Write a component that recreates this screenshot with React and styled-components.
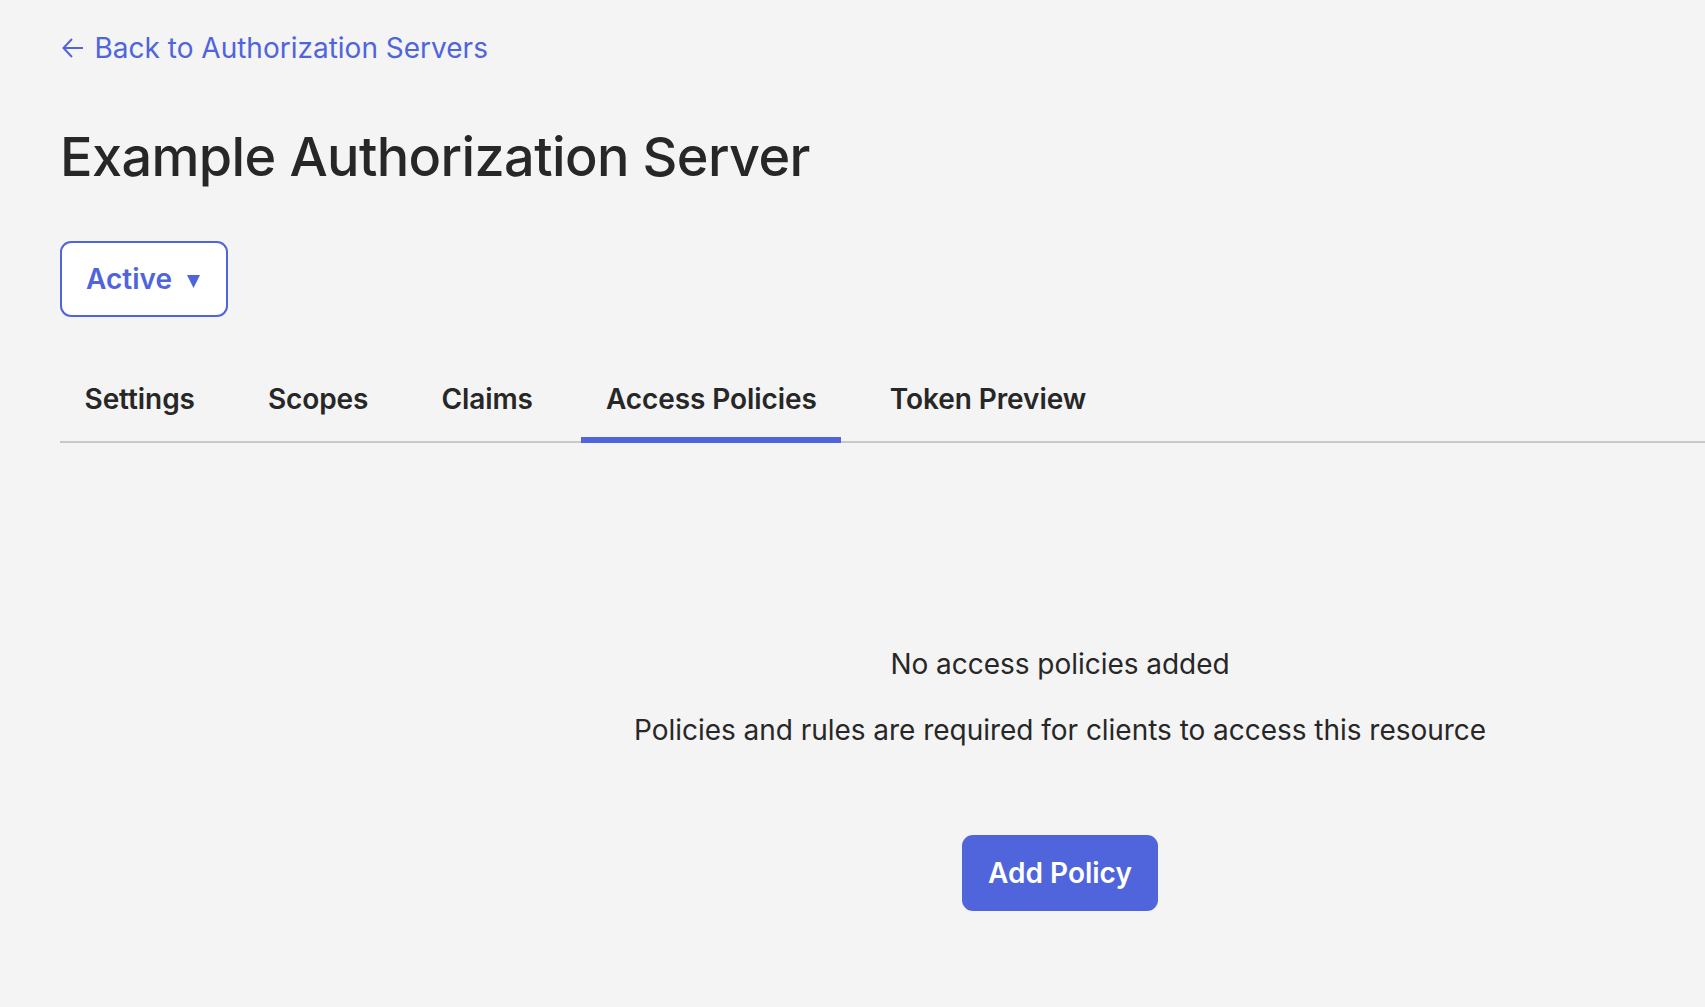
import React from 'react'
import styled, { createGlobalStyle } from "styled-components";

const blue = "#5064dc";
const ink = "#272727";

const GlobalStyle = createGlobalStyle`
  html, body {
    margin: 0;
    height: 100%;
    background: #f4f4f4;
    overflow: hidden;
  }
  body {
    font-family: Inter, "Liberation Sans", sans-serif;
    color: ${ink};
  }
`;

const Page = styled.div`
  width: 2000px;
  padding: 30px 0 0 60px;
`;

const BackLink = styled.a`
  display: inline-flex;
  align-items: center;
  gap: 11.5px;
  height: 36px;
  padding-left: 2px;
  font-size: 28px;
  line-height: 36px;
  color: ${blue};
  text-decoration: none;
`;

const Title = styled.h1`
  margin: 51px 0 0;
  font-size: 54px;
  line-height: 80px;
  font-weight: 500;
  letter-spacing: -0.62px;
`;

const StatusButton = styled.button`
  display: flex;
  align-items: center;
  gap: 15px;
  box-sizing: border-box;
  margin-top: 44px;
  width: 168px;
  height: 76px;
  padding: 0 0 0 24px;
  border: 2px solid ${blue};
  border-radius: 11px;
  background: #fff;
  color: ${blue};
  font: 600 28px Inter, "Liberation Sans", sans-serif;
`;

const Caret = styled.svg`
  width: 13px;
  height: 13px;
  margin-top: 4px;
  fill: ${blue};
`;

const Tabs = styled.nav`
  display: flex;
  gap: 24px;
  margin-top: 44px;
  height: 82px;
  box-sizing: border-box;
  border-bottom: 2px solid #c8c8c8;
`;

const Tab = styled.a`
  box-sizing: border-box;
  height: 82px;
  padding: 18px 24.5px 0;
  font-size: 28px;
  line-height: 40px;
  font-weight: 600;
  letter-spacing: -0.08px;
  color: ${ink};
  border-bottom: 6px solid ${({ $active }) => ($active ? blue : "transparent")};
`;

const Empty = styled.section`
  display: flex;
  flex-direction: column;
  align-items: center;
  padding-top: 201px;
`;

const Message = styled.p`
  margin: 0 0 26px;
  font-size: 28px;
  line-height: 40px;
  letter-spacing: -0.03px;
  color: ${ink};
`;

const AddButton = styled.button`
  box-sizing: border-box;
  margin-top: 59px;
  width: 196px;
  height: 76px;
  border: 0;
  border-radius: 11px;
  background: ${blue};
  color: #fff;
  font: 600 28px Inter, "Liberation Sans", sans-serif;
`;

const tabs = ["Settings", "Scopes", "Claims", "Access Policies", "Token Preview"];

export default function App() {
  return (
    <>
      <GlobalStyle />
      <Page>
        <BackLink href="#">
          <svg width="21" height="20" viewBox="0 0 21 20" fill="none" stroke={blue} strokeWidth="2">
            <path d="M10 1 1.500 10 10 19M1.500 10H21" />
          </svg>
          Back to Authorization Servers
        </BackLink>
        <Title>Example Authorization Server</Title>
        <StatusButton>
          Active
          <Caret viewBox="0 0 13 13"><path d="M0 0h13L6.500 13z" /></Caret>
        </StatusButton>
        <Tabs>
          {tabs.map((t) => (
            <Tab key={t} $active={t === "Access Policies"}>{t}</Tab>
          ))}
        </Tabs>
        <Empty>
          <Message>No access policies added</Message>
          <Message>Policies and rules are required for clients to access this resource</Message>
          <AddButton>Add Policy</AddButton>
        </Empty>
      </Page>
    </>
  );
}
